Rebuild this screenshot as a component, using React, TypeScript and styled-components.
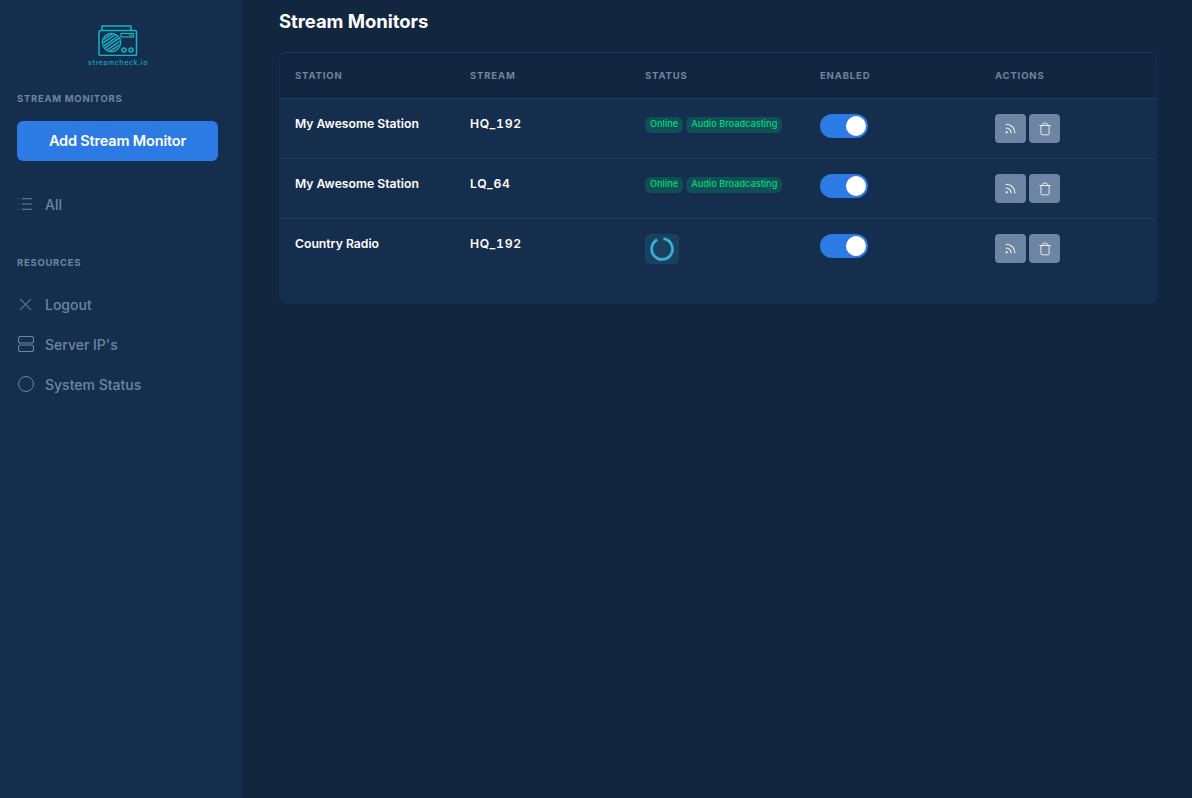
import React from 'react';
import styled, { createGlobalStyle } from 'styled-components';
import { List, X, Circle, Rss, Trash } from 'lucide-react';

const Global = createGlobalStyle`
  html, body { margin: 0; padding: 0; height: 100%; background: #12263f; }
  body { font-family: Inter, "Liberation Sans", sans-serif; overflow: hidden; }
`;
const Page = styled.div`display: flex; width: 1192px; height: 798px; background: #12263f;`;
const Sidebar = styled.aside`
  width: 242px; flex: none; box-sizing: border-box; background: #152e4d; padding: 0 24px 0 17px;
  display: flex; flex-direction: column;
`;
const Brand = styled.div`height: 67px; padding-top: 25px; box-sizing: border-box; margin-right: -1px; display: flex; flex-direction: column; align-items: center;`;
const BrandName = styled.span`font-size: 7px; line-height: 9px; color: #0fa9ba; letter-spacing: 0.6px; font-weight: 500; margin-top: 2px;`;
const Heading = styled.div<{ $top: number }>`
  font-size: 9.5px; line-height: 12px; font-weight: 700; letter-spacing: 0.72px; color: #6e84a3; text-transform: uppercase; margin-top: ${p => p.$top}px;
`;
const AddButton = styled.button`
  width: 201px; height: 40px; margin-top: 16px; padding: 0 0 2px; border: 0; border-radius: 6px; background: #2c7be5; color: #fff;
  font: 600 14.5px Inter, sans-serif; letter-spacing: -0.17px;
`;
const NavItem = styled.div<{ $top?: number }>`
  display: flex; align-items: center; height: 40px; margin-top: ${p => p.$top ?? 0}px; color: #6e84a3; font-size: 14px; font-weight: 500;
`;
const NavIcon = styled.span<{ $shift?: number }>`
  width: 28px; flex: none; display: flex; align-items: center; color: #6e84a3;
  svg { flex: none; margin-left: ${p => p.$shift ?? 0}px; }
`;
const Main = styled.main`flex: 1; padding: 10px 35px 0 37px; min-width: 0;`;
const Title = styled.h1`margin: 0; font-size: 18.5px; line-height: 22px; font-weight: 700; color: #fff; letter-spacing: -0.06px; height: 42px;`;
const Card = styled.div`
  background: #152e4d; border-radius: 8px; border: 1px solid #152e4d; border-top-color: #1e3a5c; height: 252px; box-sizing: border-box; overflow: hidden;
`;
const Columns = styled.div`display: grid; grid-template-columns: 175px 175px 175px 175px 1fr; padding-left: 15px;`;
const HeadRow = styled(Columns)`
  height: 46px; align-items: center; background: #12263f; border-bottom: 1px solid #1e3a5c; box-sizing: border-box;
`;
const HeadCell = styled.div`font-size: 9.5px; font-weight: 700; letter-spacing: 0.85px; color: #6e84a3; text-transform: uppercase;`;
const Row = styled(Columns)<{ $last?: boolean }>`
  height: 60px; box-sizing: border-box; padding-top: 15px; border-bottom: 1px solid ${p => (p.$last ? 'transparent' : '#1e3a5c')};
`;
const Cell = styled.div`font-size: 12.2px; line-height: 20px; font-weight: 600; color: #fff;`;
const StreamCell = styled(Cell)`font-variant-numeric: tabular-nums; letter-spacing: 0.75px;`;
const StatusCell = styled.div`display: flex; gap: 3px; align-items: flex-start; padding-top: 3px;`;
const Badge = styled.span`
  height: 16px; line-height: 14px; padding: 0 5px; border-radius: 6px; background: rgba(0, 217, 126, 0.2); color: #00d97e; font-size: 9.2px; font-weight: 500; white-space: nowrap;
`;
const SpinnerBox = styled.div`
  width: 34px; height: 30px; border-radius: 5px; background: rgba(57, 175, 209, 0.15); display: flex; align-items: center; justify-content: center;
`;
const Toggle = styled.div`
  width: 48px; height: 24px; border-radius: 12px; background: #2c7be5; display: flex; align-items: center; justify-content: flex-end; padding-right: 2px; box-sizing: border-box;
`;
const Knob = styled.span`width: 20px; height: 20px; border-radius: 50%; background: #fff;`;
const Actions = styled.div`display: flex; gap: 3px;`;
const ActionButton = styled.button`
  width: 31px; height: 29px; padding: 0; border: 0; border-radius: 4px; background: #6e84a3; color: #f7f9fb; display: flex; align-items: center; justify-content: center;
`;

const Logo = () => (
  <svg width="40" height="31" viewBox="0 0 40 31" fill="none" stroke="#12b5c6" strokeWidth="1.5" style={{ display: 'block' }}>
    <defs>
      <clipPath id="speaker"><circle cx="13.5" cy="17.5" r="8.4" /></clipPath>
    </defs>
    <path d="M4 6V1h29v5" />
    <rect x="1" y="5.5" width="37.5" height="25" rx="1.5" />
    <circle cx="13.5" cy="17.5" r="9.2" strokeWidth="1.2" />
    <g clipPath="url(#speaker)" strokeWidth="1.5">
      <path d="M2 14L14 6M2 17L18 6M2 20L21 7M3 23L23 9M4 25L24 11M6 27L25 14M9 28L26 17M12 29L26 20M16 30L27 23" />
    </g>
    <rect x="23" y="8.5" width="12.5" height="3.5" strokeWidth="1.2" />
    <path d="M31.5 10.2h2.5" strokeWidth="1.2" />
    <circle cx="26" cy="25" r="2" />
    <circle cx="33" cy="25" r="2" />
  </svg>
);
const ServerIcon = () => (
  <svg width="16" height="16" viewBox="0 0 16 16" fill="none" stroke="#6e84a3" strokeWidth="1.1">
    <rect x="0.5" y="0.5" width="15" height="6.5" rx="2" />
    <rect x="0.5" y="9" width="15" height="6.5" rx="2" />
    <path d="M3.5 3.7h.6M3.5 12.2h.6" />
  </svg>
);
const Spinner = () => (
  <svg width="24" height="24" viewBox="0 0 24 24" fill="none" stroke="#39afd1" strokeWidth="2.8">
    <path d="M13.5 1.7A10.4 10.4 0 1 1 7.2 2.8" />
  </svg>
);

const rows = [
  { station: 'My Awesome Station', stream: 'HQ_192', online: true },
  { station: 'My Awesome Station', stream: 'LQ_64', online: true },
  { station: 'Country Radio', stream: 'HQ_192', online: false },
];

export default function App() {
  return (
    <Page>
      <Global />
      <Sidebar>
        <Brand>
          <Logo />
          <BrandName>streamcheck.io</BrandName>
        </Brand>
        <Heading $top={26}>Stream Monitors</Heading>
        <AddButton>Add Stream Monitor</AddButton>
        <NavItem $top={23}><NavIcon $shift={-1}><List size={18} strokeWidth={1.3} /></NavIcon>All</NavItem>
        <Heading $top={33}>Resources</Heading>
        <NavItem $top={15}><NavIcon $shift={-2}><X size={21} strokeWidth={1.15} /></NavIcon>Logout</NavItem>
        <NavItem><NavIcon $shift={1}><ServerIcon /></NavIcon>Server IP's</NavItem>
        <NavItem><NavIcon><Circle size={18} strokeWidth={1.3} /></NavIcon>System Status</NavItem>
      </Sidebar>
      <Main>
        <Title>Stream Monitors</Title>
        <Card>
          <HeadRow>
            <HeadCell>Station</HeadCell>
            <HeadCell>Stream</HeadCell>
            <HeadCell>Status</HeadCell>
            <HeadCell>Enabled</HeadCell>
            <HeadCell>Actions</HeadCell>
          </HeadRow>
          {rows.map((r, i) => (
            <Row key={i} $last={i === rows.length - 1}>
              <Cell>{r.station}</Cell>
              <StreamCell>{r.stream}</StreamCell>
              {r.online ? (
                <StatusCell><Badge>Online</Badge><Badge>Audio Broadcasting</Badge></StatusCell>
              ) : (
                <div><SpinnerBox><Spinner /></SpinnerBox></div>
              )}
              <div><Toggle><Knob /></Toggle></div>
              <Actions>
                <ActionButton><Rss size={13} strokeWidth={2} /></ActionButton>
                <ActionButton><Trash size={14} strokeWidth={1.5} /></ActionButton>
              </Actions>
            </Row>
          ))}
        </Card>
      </Main>
    </Page>
  );
}
